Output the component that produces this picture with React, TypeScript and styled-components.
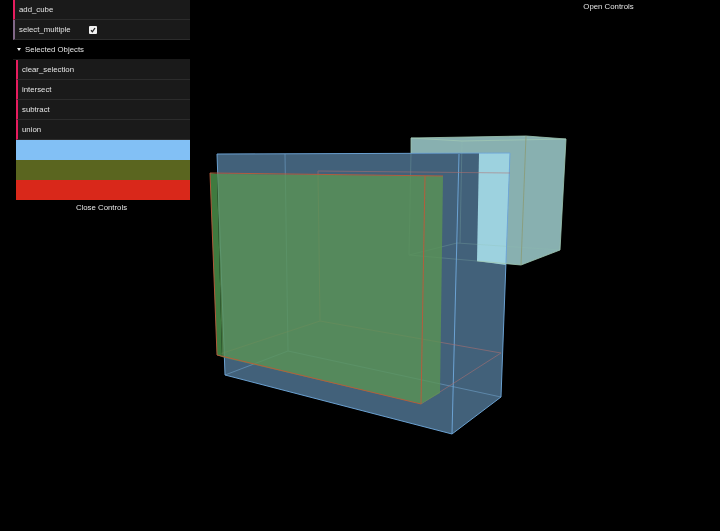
import React from "react";
import styled, { createGlobalStyle } from "styled-components";

const Global = createGlobalStyle`
  html, body { margin: 0; padding: 0; background: #000; }
  body { font-family: "Liberation Sans", Arial, sans-serif; }
`;

const Stage = styled.div`
  position: relative;
  width: 720px;
  height: 531px;
  overflow: hidden;
  background: #000;
  display: flex;
  justify-content: space-between;
  align-items: flex-start;
  padding: 0 23px 0 13px;
  box-sizing: border-box;
  color: #e4e4e4;
  font-size: 7.8px;
  filter: blur(0.45px);
`;

const Scene = styled.svg`
  position: absolute;
  inset: 0;
  width: 720px;
  height: 531px;
`;

const Panel = styled.div`
  position: relative;
  width: 177px;
  display: flex;
  flex-direction: column;
`;

const Row = styled.div<{ $accent: string }>`
  height: 20px;
  box-sizing: border-box;
  display: flex;
  align-items: center;
  padding-left: 4px;
  background: #1a1a1a;
  border-left: 2px solid ${(p) => p.$accent};
  border-bottom: 1px solid #2c2c2c;
`;

const RowLabel = styled.span`
  width: 70px;
`;

const Check = styled.span`
  width: 8px;
  height: 8px;
  background: #f2f2f2;
  border-radius: 1px;
  display: flex;
  align-items: center;
  justify-content: center;
`;

const FolderTitle = styled.div`
  height: 20px;
  display: flex;
  align-items: center;
  gap: 4px;
  padding-left: 4px;
  background: #000;
  border-bottom: 1px solid #1a1a1a;
  box-sizing: border-box;
`;

const Caret = styled.span`
  width: 0;
  height: 0;
  border-left: 2px solid transparent;
  border-right: 2px solid transparent;
  border-top: 3px solid #eee;
`;

const Folder = styled.div`
  margin-left: 3px;
  display: flex;
  flex-direction: column;
`;

const Swatch = styled.div<{ $color: string }>`
  height: 20px;
  background: ${(p) => p.$color};
`;

const Toggle = styled.div`
  text-align: center;
  line-height: 15px;
  height: 15px;
`;

const OpenToggle = styled(Toggle)`
  position: relative;
  width: 177px;
  line-height: 13px;
`;

type Pt = [number, number];
type Seg = [Pt, Pt];
const pts = (a: Pt[]) => a.map((p) => p.join(",")).join(" ");

const blueFill: Pt[] = [[217, 154], [510, 153], [505, 290], [501, 397], [452, 434], [225, 375]];
const cubeFill: Pt[] = [[411, 138], [526, 136], [566, 139], [560, 250], [521, 265], [477, 261], [479, 153], [411, 153]];
const overlap: Pt[] = [[479, 153], [510, 153], [506, 265], [477, 261]];
const greenFill: Pt[] = [[217, 174], [443, 176], [440, 393], [421, 404], [225, 358], [222, 357]];
const greenStrip: Pt[] = [[210, 173], [217, 174], [222, 357], [217, 355]];

const blueLines: Seg[] = [
  [[217, 154], [510, 153]],
  [[217, 154], [225, 375]],
  [[510, 153], [501, 397]],
  [[225, 375], [452, 434]],
  [[459, 154], [452, 434]],
  [[452, 434], [501, 397]],
];
const blueInner: Seg[] = [
  [[285, 154], [288, 351]],
  [[288, 351], [501, 397]],
  [[225, 375], [288, 351]],
];
const redLines: Seg[] = [
  [[210, 173], [443, 176]],
  [[210, 173], [217, 355]],
  [[217, 355], [421, 404]],
  [[425, 176], [421, 404]],
];
const redFaint: Seg[] = [
  [[318, 171], [510, 173]],
  [[318, 171], [320, 321]],
  [[217, 355], [320, 321]],
  [[320, 321], [501, 353]],
  [[421, 404], [501, 353]],
];
const cubeLines: Seg[] = [
  [[411, 138], [526, 136]],
  [[526, 136], [566, 139]],
  [[566, 139], [560, 250]],
  [[521, 265], [560, 250]],
  [[477, 261], [521, 265]],
  [[411, 138], [411, 153]],
  [[462, 141], [566, 139]],
  [[411, 138], [462, 141]],
];
const cubeFaint: Seg[] = [
  [[411, 153], [409, 255]],
  [[409, 255], [477, 261]],
  [[409, 255], [457, 243]],
  [[457, 243], [560, 250]],
  [[462, 141], [460, 243]],
];

const Lines = ({ set, color, opacity = 1 }: { set: Seg[]; color: string; opacity?: number }) => (
  <g stroke={color} strokeWidth={1} opacity={opacity}>
    {set.map(([a, b], i) => (
      <line key={i} x1={a[0]} y1={a[1]} x2={b[0]} y2={b[1]} />
    ))}
  </g>
);

export default function App() {
  return (
    <>
      <Global />
      <Stage>
        <Scene viewBox="0 0 720 531">
          <polygon points={pts(cubeFill)} fill="#88b0b0" />
          <polygon points={pts(blueFill)} fill="#42617a" />
          <polygon points={pts(overlap)} fill="#9dd2df" />
          <Lines set={cubeFaint} color="#8fc0b0" opacity={0.25} />
          <Lines set={blueInner} color="#6fa0c8" opacity={0.6} />
          <Lines set={blueLines} color="#6ea6d8" opacity={0.95} />
          <Lines set={cubeLines} color="#a0c8b4" opacity={0.8} />
          <Lines set={[[[526, 136], [521, 265]]]} color="#8a9f80" />
          <Lines set={redFaint} color="#b07070" opacity={0.55} />
          <polygon points={pts(greenFill)} fill="#5a9455" opacity={0.8} />
          <polygon points={pts(greenStrip)} fill="#3f7a3f" />
          <Lines set={redLines} color="#b85c3c" opacity={0.95} />
        </Scene>
        <Panel>
          <Row $accent="#e61d5f"><RowLabel>add_cube</RowLabel></Row>
          <Row $accent="#806787">
            <RowLabel>select_multiple</RowLabel>
            <Check>
              <svg width="6" height="6" viewBox="0 0 6 6">
                <path d="M1 3.2 L2.4 4.8 L5 1" stroke="#222" strokeWidth="1.3" fill="none" />
              </svg>
            </Check>
          </Row>
          <FolderTitle><Caret />Selected Objects</FolderTitle>
          <Folder>
            <Row $accent="#e61d5f">clear_selection</Row>
            <Row $accent="#e61d5f">intersect</Row>
            <Row $accent="#e61d5f">subtract</Row>
            <Row $accent="#e61d5f">union</Row>
            <Swatch $color="#82c0f5" />
            <Swatch $color="#5a651f" />
            <Swatch $color="#d9281a" />
          </Folder>
          <Toggle>Close Controls</Toggle>
        </Panel>
        <OpenToggle>Open Controls</OpenToggle>
      </Stage>
    </>
  );
}
